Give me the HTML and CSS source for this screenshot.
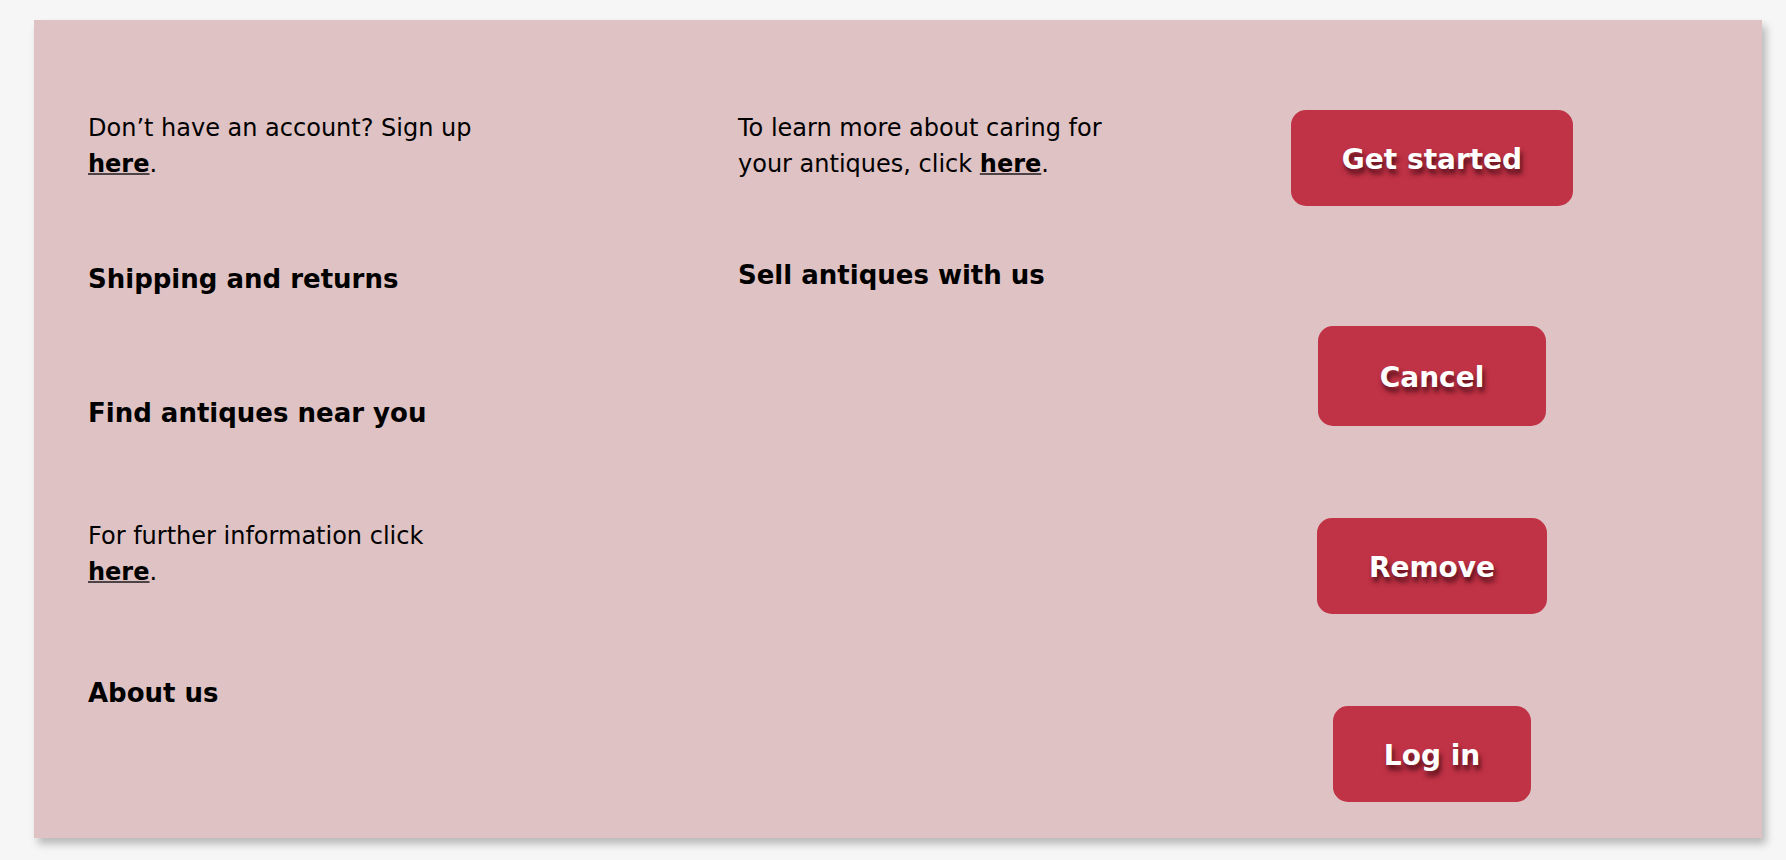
FILE: index.html
```html
<!DOCTYPE html>
<html lang="en">
<head>
    <meta charset="UTF-8">
    <meta name="viewport" content="width=device-width, initial-scale=1.0">
    <title>Antiques - Footer</title>
    <link rel="stylesheet" href="styles.css">
</head>
<body>
    <div class="card">
        <div class="column">
            <p class="text">Don’t have an account? Sign up <a href="#">here</a>.</p>
            <h3 class="heading shipping">Shipping and returns</h3>
            <h3 class="heading find">Find antiques near you</h3>
            <p class="text further">For further information click <a href="#">here</a>.</p>
            <h3 class="heading about">About us</h3>
        </div>

        <div class="column">
            <p class="text">To learn more about caring for your antiques, click <a href="#">here</a>.</p>
            <h3 class="heading sell">Sell antiques with us</h3>
        </div>

        <div class="column buttons">
            <button class="btn">Get started</button>
            <button class="btn btn-cancel">Cancel</button>
            <button class="btn btn-remove">Remove</button>
            <button class="btn btn-login">Log in</button>
        </div>
    </div>
</body>
</html>
```

FILE: styles.css
```css
body {
    font-family: 'DejaVu Sans', 'Open Sans', sans-serif;
    margin: 0;
    padding: 20px 24px 22px 34px;
    background-color: #f6f6f6;
    color: #000;
}
.card {
    display: grid;
    grid-template-columns: 650px 544px 300px;
    padding: 90px 54px 36px;
    background-color: #dfc2c3;
    box-shadow: 4px 6px 8px rgba(0, 0, 0, 0.25);
}
.column {
    display: flex;
    flex-direction: column;
    align-items: flex-start;
}
.text {
    max-width: 400px;
    margin: 0;
    font-size: 24px;
    line-height: 36px;
}
.text a {
    color: #000;
    font-weight: 700;
    text-decoration-color: #4d4245;
    text-decoration-thickness: 2px;
}
.heading {
    margin: 0;
    font-size: 26px;
    font-weight: 700;
    line-height: 31px;
}
.shipping { margin-top: 82px; }
.find { margin-top: 103px; }
.further { margin-top: 89px; }
.about { margin-top: 88px; }
.sell { margin-top: 78px; }

.buttons {
    align-items: center;
}
.btn {
    font-family: inherit;
    font-size: 28px;
    font-weight: 700;
    line-height: 34px;
    color: #fff;
    background-color: #c03245;
    border: none;
    border-radius: 15px;
    padding: 33px 51px 29px;
    text-shadow: 2px 5px 5px rgba(40, 0, 10, 0.7);
    cursor: pointer;
}
.btn-cancel {
    margin-top: 120px;
    padding: 35px 62px 31px;
}
.btn-remove {
    margin-top: 92px;
    padding: 33px 52px 29px;
}
.btn-login {
    margin-top: 92px;
}
```
